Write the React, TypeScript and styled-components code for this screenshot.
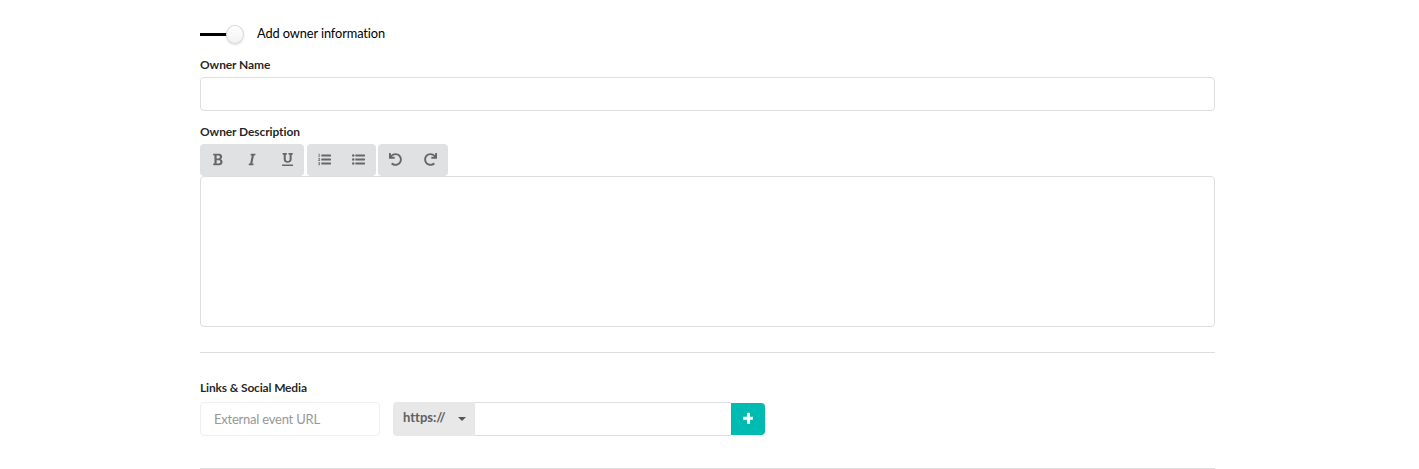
import React from 'react';
import styled, { createGlobalStyle, css } from 'styled-components';
import { FaUndo } from 'react-icons/fa';

const Global = createGlobalStyle`
  * { box-sizing: border-box; }
  body { margin: 0; background: #fff; color: rgba(0,0,0,.87); font: 13px/18px Lato, "Liberation Sans", sans-serif; font-variant-ligatures: none; overflow: hidden; }
  input, textarea, button { font-family: inherit; }
`;

const Form = styled.main`
  width: 1015px;
  margin-left: 200px;
  padding-top: 24px;
`;

const Toggle = styled.label`
  display: flex;
  align-items: center;
  height: 20px;
  color: #000;
  font-size: 12.8px;
  letter-spacing: -.1px;
`;

const ToggleText = styled.span`
  padding-bottom: 2px;
`;

const Track = styled.span`
  display: flex;
  align-items: center;
  justify-content: flex-end;
  width: 44px;
  height: 20px;
  margin-right: 13px;
  background: linear-gradient(#000, #000) 0 9px / 30px 3px no-repeat;
`;

const Knob = styled.span`
  width: 18px;
  height: 19px;
  border-radius: 50%;
  border: 1px solid #d8d8d9;
  background: linear-gradient(#fff, #f2f2f2);
  box-shadow: 0 1px 2px rgba(34,36,38,.15);
`;

const Label = styled.div<{ $tracking?: number }>`
  height: 18px;
  font-size: 12px;
  line-height: 18px;
  font-weight: 700;
  letter-spacing: ${p => p.$tracking ?? -0.1}px;
`;

const Field = styled.section<{ $top: number }>`
  margin-top: ${p => p.$top}px;
`;

const outline = css`
  display: block;
  border: 1px solid #dededf;
  border-radius: 4px;
  background: #fff;
  outline: none;
  resize: none;
  margin: 0;
`;

const TextInput = styled.input`
  ${outline}
  width: 100%;
  height: 34px;
  margin-top: 3px;
`;

const Editor = styled.textarea`
  ${outline}
  width: 100%;
  height: 151px;
`;

const Toolbar = styled.div`
  display: flex;
  gap: 2.5px;
  margin-top: 3px;
`;

const Group = styled.div<{ $inset?: number }>`
  display: flex;
  border-radius: 4px;
  overflow: hidden;

  > button { padding-left: ${p => p.$inset ?? 0}px; }
`;

const Tool = styled.button`
  display: flex;
  align-items: center;
  justify-content: center;
  width: 34.7px;
  height: 32px;
  padding: 0 0 1px;
  border: 0;
  background: #e0e1e2;
  color: #666768;
  font-size: 13px;
`;

const Glyph = styled.svg`
  display: block;
  height: 1em;
  width: auto;
  fill: currentColor;
`;

const Flip = styled.span`
  display: flex;
  transform: scaleX(-1);
`;

const Divider = styled.hr<{ $top: number }>`
  height: 1px;
  margin: ${p => p.$top}px 0 0;
  border: 0;
  background: #dededf;
`;

const LinkRow = styled.div`
  display: flex;
  margin-top: 5px;
`;

const LinkType = styled.div`
  ${outline}
  width: 180px;
  height: 34px;
  margin-right: 13px;
  padding: 0 13px;
  line-height: 33px;
  border-color: #efefef;
  color: #979797;
  letter-spacing: -.23px;
`;

const Protocol = styled.div`
  display: flex;
  align-items: center;
  justify-content: space-between;
  width: 82px;
  height: 34px;
  padding: 0 9px 4px 10px;
  border-radius: 4px 0 0 4px;
  background: #e8e8e8;
  color: #5f5f5f;
  font-size: 13px;
  font-weight: 700;
`;

const Caret = styled.span`
  margin-top: 4px;
  border: 4px solid transparent;
  border-top-color: #555;
  border-bottom: 0;
`;

const UrlInput = styled.input`
  ${outline}
  width: 256px;
  height: 34px;
  border-width: 1px 0;
  border-radius: 0;
`;

const AddButton = styled.button`
  display: flex;
  align-items: center;
  justify-content: center;
  width: 34px;
  height: 32px;
  margin-top: 1px;
  padding: 0 0 1px;
  border: 0;
  border-radius: 0 4px 4px 0;
  background: #00bbb1;
  color: #fff;
  font-size: 12.5px;
`;

const Bold = () => (
  <Glyph viewBox="0 0 384 512"><path d="M304.793 243.891c33.639-18.537 53.657-54.16 53.657-95.693 0-48.236-26.25-87.626-68.626-104.179C265.138 34.01 240.849 32 209.661 32H24c-8.837 0-16 7.163-16 16v33.049c0 8.837 7.163 16 16 16h33.113v318.53H24c-8.837 0-16 7.163-16 16V464c0 8.837 7.163 16 16 16h195.69c24.203 0 44.834-1.289 66.866-7.584C337.52 457.193 376 410.647 376 350.014c0-52.168-26.573-91.684-71.207-106.123zM142.217 100.809h67.444c16.294 0 27.536 2.019 37.525 6.717 15.828 8.479 24.906 26.502 24.906 49.446 0 35.029-20.32 56.79-53.029 56.79h-76.846V100.809zm112.642 305.475c-10.14 4.056-22.677 4.907-31.409 4.907h-81.233V281.943h84.367c39.645 0 63.057 25.38 63.057 63.728 0 28.007-13.027 52.998-34.782 60.613z" /></Glyph>
);

const Italic = () => (
  <Glyph viewBox="0 0 320 512"><path d="M204.758 416h-33.849l62.092-320h40.725a16 16 0 0 0 15.704-12.937l6.242-32C297.599 41.184 290.034 32 279.968 32H120.235a16 16 0 0 0-15.704 12.937l-6.242 32C96.362 86.816 103.927 96 113.993 96h33.846l-62.09 320H46.278a16 16 0 0 0-15.704 12.935l-6.245 32C22.402 470.815 29.967 480 40.034 480h158.479a16 16 0 0 0 15.704-12.935l6.245-32c1.927-9.88-5.638-19.065-15.704-19.065z" /></Glyph>
);

const Underline = () => (
  <Glyph viewBox="0 0 448 512"><path d="M224.264 388.24c-91.669 0-156.603-51.165-156.603-151.392V64H39.37c-8.837 0-16-7.163-16-16V16c0-8.837 7.163-16 16-16h137.39c8.837 0 16 7.163 16 16v32c0 8.837-7.163 16-16 16h-28.813v172.848c0 53.699 28.314 79.444 76.317 79.444 46.966 0 75.796-25.434 75.796-79.965V64h-28.291c-8.837 0-16-7.163-16-16V16c0-8.837 7.163-16 16-16h136.868c8.837 0 16 7.163 16 16v32c0 8.837-7.163 16-16 16h-28.291v172.848c0 99.405-64.881 151.392-155.569 151.392zM16 448h416c8.837 0 16 7.163 16 16v32c0 8.837-7.163 16-16 16H16c-8.837 0-16-7.163-16-16v-32c0-8.837 7.163-16 16-16z" /></Glyph>
);

const Lines = () => (
  <>
    <rect x="128" y="60" width="384" height="76" rx="16" />
    <rect x="128" y="218" width="384" height="76" rx="16" />
    <rect x="128" y="376" width="384" height="76" rx="16" />
  </>
);

const OrderedList = () => (
  <Glyph viewBox="0 0 512 512">
    <Lines />
    <path d="M20 30h40v95h20v26H10v-26h20V57H12zM10 198h54q16 0 16 18v24l-35 45h36v26H10v-24l42-51v-12H10zM10 362h68v26l-18 24q20 8 20 30 0 38-38 38H10v-26h30q12 0 12-11t-14-11H24v-18l19-26H10z" />
  </Glyph>
);

const BulletList = () => (
  <Glyph viewBox="0 0 512 512">
    <Lines />
    <circle cx="48" cy="98" r="48" />
    <circle cx="48" cy="256" r="48" />
    <circle cx="48" cy="414" r="48" />
  </Glyph>
);

const Plus = () => (
  <Glyph viewBox="0 0 448 512"><path d="M448 294.2v-76.4c0-13.3-10.7-24-24-24H286.2V56c0-13.3-10.7-24-24-24h-76.4c-13.3 0-24 10.7-24 24v137.8H24c-13.3 0-24 10.7-24 24v76.4c0 13.3 10.7 24 24 24h137.8V456c0 13.3 10.7 24 24 24h76.4c13.3 0 24-10.7 24-24V318.2H424c13.3 0 24-10.7 24-24z" /></Glyph>
);

export default function App() {
  return (
    <>
      <Global />
      <Form>
        <Toggle><Track><Knob /></Track><ToggleText>Add owner information</ToggleText></Toggle>
        <Field $top={12}>
          <Label>Owner Name</Label>
          <TextInput aria-label="Owner Name" />
        </Field>
        <Field $top={12}>
          <Label>Owner Description</Label>
          <Toolbar>
            <Group $inset={1}>
              <Tool><Bold /></Tool>
              <Tool><Italic /></Tool>
              <Tool><Underline /></Tool>
            </Group>
            <Group $inset={0.5}>
              <Tool><OrderedList /></Tool>
              <Tool><BulletList /></Tool>
            </Group>
            <Group>
              <Tool><FaUndo /></Tool>
              <Tool><Flip><FaUndo /></Flip></Tool>
            </Group>
          </Toolbar>
          <Editor aria-label="Owner Description" />
        </Field>
        <Divider $top={25} />
        <Field $top={26}>
          <Label $tracking={-0.16}>Links &amp; Social Media</Label>
          <LinkRow>
            <LinkType>External event URL</LinkType>
            <Protocol>https://<Caret /></Protocol>
            <UrlInput aria-label="URL" />
            <AddButton aria-label="Add link"><Plus /></AddButton>
          </LinkRow>
        </Field>
        <Divider $top={32} />
      </Form>
    </>
  );
}
